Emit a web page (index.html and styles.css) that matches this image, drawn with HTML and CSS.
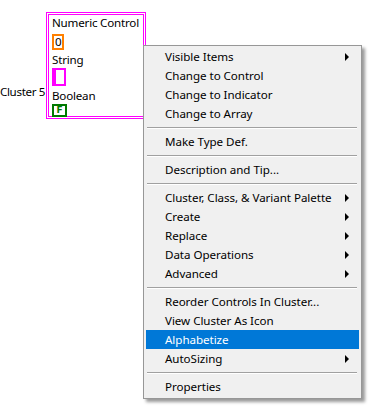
FILE: index.html
```html
<!DOCTYPE html>
<html lang="en">
<head>
    <meta charset="UTF-8" />
    <title>Cluster menu</title>
    <link rel="stylesheet" href="styles.css">
</head>
<body>
    <div class="panel">
        <div class="cluster-label">Cluster 5</div>
        <div class="cluster">
            <div class="label">Numeric Control</div>
            <div class="numeric">0</div>
            <div class="label tight">String</div>
            <div class="string"></div>
            <div class="label tight">Boolean</div>
            <div class="boolean">F</div>
        </div>
    </div>

    <div class="menu">
        <div class="item sub">Visible Items</div>
        <div class="item">Change to Control</div>
        <div class="item">Change to Indicator</div>
        <div class="item">Change to Array</div>
        <div class="sep"></div>
        <div class="item">Make Type Def.</div>
        <div class="sep"></div>
        <div class="item">Description and Tip...</div>
        <div class="sep"></div>
        <div class="item sub">Cluster, Class, &amp; Variant Palette</div>
        <div class="item sub">Create</div>
        <div class="item sub">Replace</div>
        <div class="item sub">Data Operations</div>
        <div class="item sub">Advanced</div>
        <div class="sep"></div>
        <div class="item">Reorder Controls In Cluster...</div>
        <div class="item">View Cluster As Icon</div>
        <div class="item active">Alphabetize</div>
        <div class="item sub">AutoSizing</div>
        <div class="sep"></div>
        <div class="item">Properties</div>
    </div>
</body>
</html>
```

FILE: styles.css
```css
body {
    margin: 0;
    padding: 0;
    background-color: #ffffff;
    font-family: "Noto Sans", "Open Sans", sans-serif;
    font-size: 11.6px;
    color: #000000;
}

.panel {
    display: flex;
    align-items: flex-start;
}

.cluster-label {
    width: 46px;
    margin-top: 84px;
    line-height: 16px;
    letter-spacing: -0.35px;
    white-space: nowrap;
}

.cluster {
    margin-top: 12px;
    width: 91px;
    height: 101px;
    border: 3px double #ff00ff;
    padding-left: 3px;
}

    .cluster .label {
        line-height: 16px;
        letter-spacing: -0.2px;
        white-space: nowrap;
    }

    .cluster .tight {
        margin-top: 2px;
    }

.numeric {
    margin-top: 3px;
    width: 8px;
    height: 12px;
    border: 2px solid #ff8000;
    line-height: 12px;
    text-indent: 1px;
}

.string {
    width: 8px;
    height: 14px;
    border: 2px solid #ff00ff;
    border-left-width: 4px;
}

.boolean {
    width: 11px;
    height: 9px;
    border: 2px solid #007a00;
    color: #007a00;
    font-family: "DejaVu Sans", sans-serif;
    font-size: 9px;
    font-weight: bold;
    line-height: 9px;
    text-align: center;
}

.menu {
    position: absolute;
    left: 143px;
    top: 45px;
    width: 213px;
    padding: 1px 2px 2px 2px;
    background-color: #f0f0f0;
    border: 1px solid #979797;
    box-shadow: 3px 3px 3px rgba(0, 0, 0, 0.4);
}

    .menu .item {
        position: relative;
        height: 19px;
        line-height: 19px;
        padding-left: 19px;
        letter-spacing: -0.05px;
        white-space: nowrap;
    }

    .menu .sub::after {
        content: "";
        position: absolute;
        right: 10px;
        top: 6px;
        border-top: 4px solid transparent;
        border-bottom: 4px solid transparent;
        border-left: 4px solid #000000;
    }

    .menu .active {
        background-color: #0078d7;
        color: #ffffff;
    }

        .menu .active.sub::after {
            border-left-color: #ffffff;
        }

    .menu .sep {
        margin: 4px 2px 3px 1px;
        border-top: 1px solid #a0a0a0;
        border-bottom: 1px solid #ffffff;
    }
```
